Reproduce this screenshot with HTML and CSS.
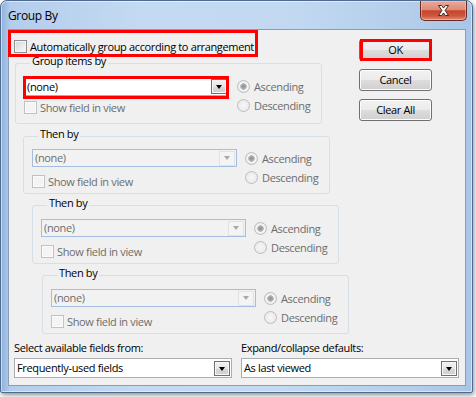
FILE: index.html
```html
<!DOCTYPE html>
<html>
<head>
<meta charset="utf-8">
<title>Group By</title>
<link rel="stylesheet" href="styles.css">
</head>
<body>
<div class="window">
  <div class="titlebar">
    <span class="title">Group By</span>
    <div class="close">
      <svg width="13" height="11" viewBox="0 0 13 11"><path d="M1.5 0.5 H4.6 L6.5 3.1 L8.4 0.5 H11.5 L8.1 5.5 L11.5 10.5 H8.4 L6.5 7.9 L4.6 10.5 H1.5 L4.9 5.5 Z" fill="#fff" stroke="#4a2420" stroke-width="1" stroke-linejoin="round"/></svg>
    </div>
  </div>
  <div class="client">
    <div class="main">
      <div class="left">
        <div class="auto mark mark-auto">
          <span class="cb"></span><span>Automatically group according to arrangement</span>
        </div>

        <div class="grp g1">
          <div class="legend">Group items by</div>
          <div class="opts">
            <div class="col-l">
              <div class="combo on mark mark-combo"><span class="val">(none)</span><span class="dd"><span class="arrow"></span></span></div>
              <div class="chkrow dis"><span class="cb cb-dis"></span><span>Show field in view</span></div>
            </div>
            <div class="col-r dis">
              <div class="rrow"><span class="rb checked"></span><span>Ascending</span></div>
              <div class="rrow"><span class="rb"></span><span>Descending</span></div>
            </div>
          </div>
        </div>

        <div class="grp g2">
          <div class="legend">Then by</div>
          <div class="opts">
            <div class="col-l">
              <div class="combo off"><span class="val">(none)</span><span class="dd"><span class="arrow"></span></span></div>
              <div class="chkrow dis"><span class="cb cb-dis"></span><span>Show field in view</span></div>
            </div>
            <div class="col-r dis">
              <div class="rrow"><span class="rb checked"></span><span>Ascending</span></div>
              <div class="rrow"><span class="rb"></span><span>Descending</span></div>
            </div>
          </div>
        </div>

        <div class="grp g3">
          <div class="legend">Then by</div>
          <div class="opts">
            <div class="col-l">
              <div class="combo off"><span class="val">(none)</span><span class="dd"><span class="arrow"></span></span></div>
              <div class="chkrow dis"><span class="cb cb-dis"></span><span>Show field in view</span></div>
            </div>
            <div class="col-r dis">
              <div class="rrow"><span class="rb checked"></span><span>Ascending</span></div>
              <div class="rrow"><span class="rb"></span><span>Descending</span></div>
            </div>
          </div>
        </div>

        <div class="grp g4">
          <div class="legend">Then by</div>
          <div class="opts">
            <div class="col-l">
              <div class="combo off"><span class="val">(none)</span><span class="dd"><span class="arrow"></span></span></div>
              <div class="chkrow dis"><span class="cb cb-dis"></span><span>Show field in view</span></div>
            </div>
            <div class="col-r dis">
              <div class="rrow"><span class="rb checked"></span><span>Ascending</span></div>
              <div class="rrow"><span class="rb"></span><span>Descending</span></div>
            </div>
          </div>
        </div>
      </div>

      <div class="buttons">
        <div class="btn mark mark-ok">OK</div>
        <div class="btn">Cancel</div>
        <div class="btn">Clear All</div>
      </div>
    </div>

    <div class="bottom">
      <div class="field">
        <div class="flabel">Select available fields from:</div>
        <div class="combo on big"><span class="val">Frequently-used fields</span><span class="dd"><span class="arrow"></span></span></div>
      </div>
      <div class="field">
        <div class="flabel">Expand/collapse defaults:</div>
        <div class="combo on big"><span class="val">As last viewed</span><span class="dd"><span class="arrow"></span></span></div>
      </div>
    </div>
  </div>
</div>
</body>
</html>
```

FILE: styles.css
```css
* { box-sizing: border-box; }

html, body {
  margin: 0;
  padding: 0;
}

body {
  width: 476px;
  height: 397px;
  overflow: hidden;
  background: #ffffff;
  font-family: "Open Sans", "Noto Sans", sans-serif;
  font-size: 11px;
  letter-spacing: -0.35px;
  color: #000;
}

/* ---------- window frame ---------- */
.window {
  width: 473px;
  height: 393px;
  border: 1px solid #4f6c90;
  border-radius: 7px 7px 2px 2px;
  background: linear-gradient(90deg, #8fb1dc 0%, #b3cdec 2%, #c4daf2 30%, #c2d9f1 60%, #b5cfeb 85%, #a9c5e6 100%);
  box-shadow: 1px 2px 5px rgba(0, 0, 0, 0.45), inset 0 0 0 1px rgba(255, 255, 255, 0.5);
  padding: 0 6px 6px 7px;
  display: flex;
  flex-direction: column;
}

.titlebar {
  height: 28px;
  margin: 0 -6px 0 -7px;
  padding-left: 7px;
  display: flex;
  align-items: flex-start;
}

.title {
  margin-top: 7px;
  font-size: 12px;
  line-height: 16px;
  color: #000;
}

.close {
  margin-left: auto;
  margin-right: 5px;
  width: 47px;
  height: 20px;
  border: 1px solid #6a2a22;
  border-top: none;
  border-radius: 0 0 5px 5px;
  background: linear-gradient(180deg, #eaa899 0%, #dc8b79 45%, #c7442c 52%, #cd563c 78%, #e28d76 100%);
  box-shadow: inset 0 0 0 1px rgba(255, 210, 200, 0.45);
  display: flex;
  align-items: center;
  justify-content: center;
}

.close svg { display: block; }

/* ---------- client ---------- */
.client {
  flex: 1;
  background: #f0f0f0;
  border: 1px solid #8a9db5;
  display: flex;
  flex-direction: column;
}

.main {
  display: flex;
  align-items: flex-start;
}

.left {
  width: 340px;
  display: flex;
  flex-direction: column;
  align-items: flex-start;
}

/* red annotation boxes */
.mark { position: relative; }
.mark::after {
  content: "";
  position: absolute;
  border: 3px solid #ff0000;
  pointer-events: none;
}
.mark-auto::after { top: -3px; left: -3px; right: -3px; bottom: -3px; }
.mark-combo::after { top: -2px; left: -2px; right: -1px; bottom: -4px; }
.mark-ok::after { top: -1px; left: 0; right: -1px; bottom: -1px; }

.auto {
  margin: 3px 0 0 2px;
  width: 244px;
  height: 21px;
  padding: 7px 0 0 3px;
  display: flex;
  align-items: flex-start;
  gap: 3px;
  line-height: 13px;
}

/* checkboxes */
.cb {
  flex: none;
  width: 13px;
  height: 13px;
  border: 1px solid #8e8f8f;
  background: linear-gradient(135deg, #d6d6d6 0%, #ececec 60%, #fafafa 100%);
  box-shadow: inset 0 0 0 1px #f4f4f4;
}
.cb-dis {
  border-color: #c2c2c2;
  background: #f4f4f4;
  box-shadow: inset 0 0 0 1px #fbfbfb;
}

/* group boxes */
.grp {
  width: 307px;
  border: 1px solid #d5dfe5;
  border-radius: 3px;
  padding: 0 8px 5px 8px;
}
.g1 { margin: 9px 0 0 6px; padding-bottom: 8px; }
.g2 { margin: 12px 0 0 14px; }
.g3 { margin: 11px 0 0 23px; }
.g4 { margin: 11px 0 0 33px; }

.legend {
  width: max-content;
  margin: -10px 0 0 6px;
  padding: 0 2px;
  line-height: 14px;
  background: #f0f0f0;
}

.opts {
  display: flex;
  gap: 8px;
  margin-top: 9px;
}
.g2 .opts { margin-top: 8px; }

.col-l {
  width: 205px;
  display: flex;
  flex-direction: column;
}

.chkrow {
  display: flex;
  align-items: center;
  gap: 3px;
  margin-top: 8px;
  line-height: 13px;
}
.g1 .chkrow { margin-top: 5px; }

.dis { color: #6d6d6d; }

.col-r {
  display: flex;
  flex-direction: column;
}

.rrow {
  height: 19px;
  display: flex;
  align-items: center;
  gap: 4px;
}

.rb {
  width: 13px;
  height: 13px;
  border-radius: 50%;
  border: 1px solid #bdbdbd;
  background: radial-gradient(circle, #f6f6f6 0, #ececec 5px, #e2e2e2 6px);
}
.rb.checked {
  background: radial-gradient(circle, #8f8f8f 0, #a6a6a6 2px, #b9b9b9 3px, #f7f7f7 3.6px, #eeeeee 5px, #e2e2e2 6px);
}

/* combo boxes */
.combo {
  height: 18px;
  display: flex;
  align-items: center;
  padding-left: 2px;
  border: 1px solid #a4bedf;
  background: #f2f2f2;
  color: #6d6d6d;
}
.combo.on {
  height: 19px;
  border-color: #abadb3;
  background: #ffffff;
  color: #000;
}
.combo.big { height: 20px; }

.val {
  flex: 1;
  line-height: 14px;
  white-space: nowrap;
}

.dd {
  flex: none;
  width: 16px;
  height: 15px;
  margin-right: 1px;
  display: flex;
  align-items: center;
  justify-content: center;
  border: 1px solid #e2e2e2;
  background: #f4f4f4;
}
.combo.on .dd {
  border-color: #707070;
  background: linear-gradient(180deg, #f2f2f2 0%, #e6e6e6 50%, #d8d8d8 51%, #cfcfcf 100%);
  box-shadow: inset 0 0 0 1px #f8f8f8;
}
.combo.big .dd { margin-top: 1px; }

.arrow {
  width: 0;
  height: 0;
  border-left: 3.5px solid transparent;
  border-right: 3.5px solid transparent;
  border-top: 4px solid #a9a9a9;
}
.combo.on .arrow { border-top-color: #000; }

/* buttons */
.buttons {
  margin: 9px 0 0 10px;
  display: flex;
  flex-direction: column;
  gap: 8px;
}

.btn {
  width: 73px;
  height: 22px;
  border: 1px solid #707070;
  border-radius: 3px;
  background: linear-gradient(180deg, #f2f2f2 0%, #ebebeb 48%, #dddddd 52%, #cfcfcf 100%);
  box-shadow: inset 0 0 0 1px #fcfcfc;
  display: flex;
  align-items: center;
  justify-content: center;
  line-height: 14px;
}

/* bottom row */
.bottom {
  display: flex;
  gap: 9px;
  margin: 7px 0 0 5px;
}

.field { width: 218px; }

.flabel {
  line-height: 14px;
  margin-bottom: 3px;
}
```
